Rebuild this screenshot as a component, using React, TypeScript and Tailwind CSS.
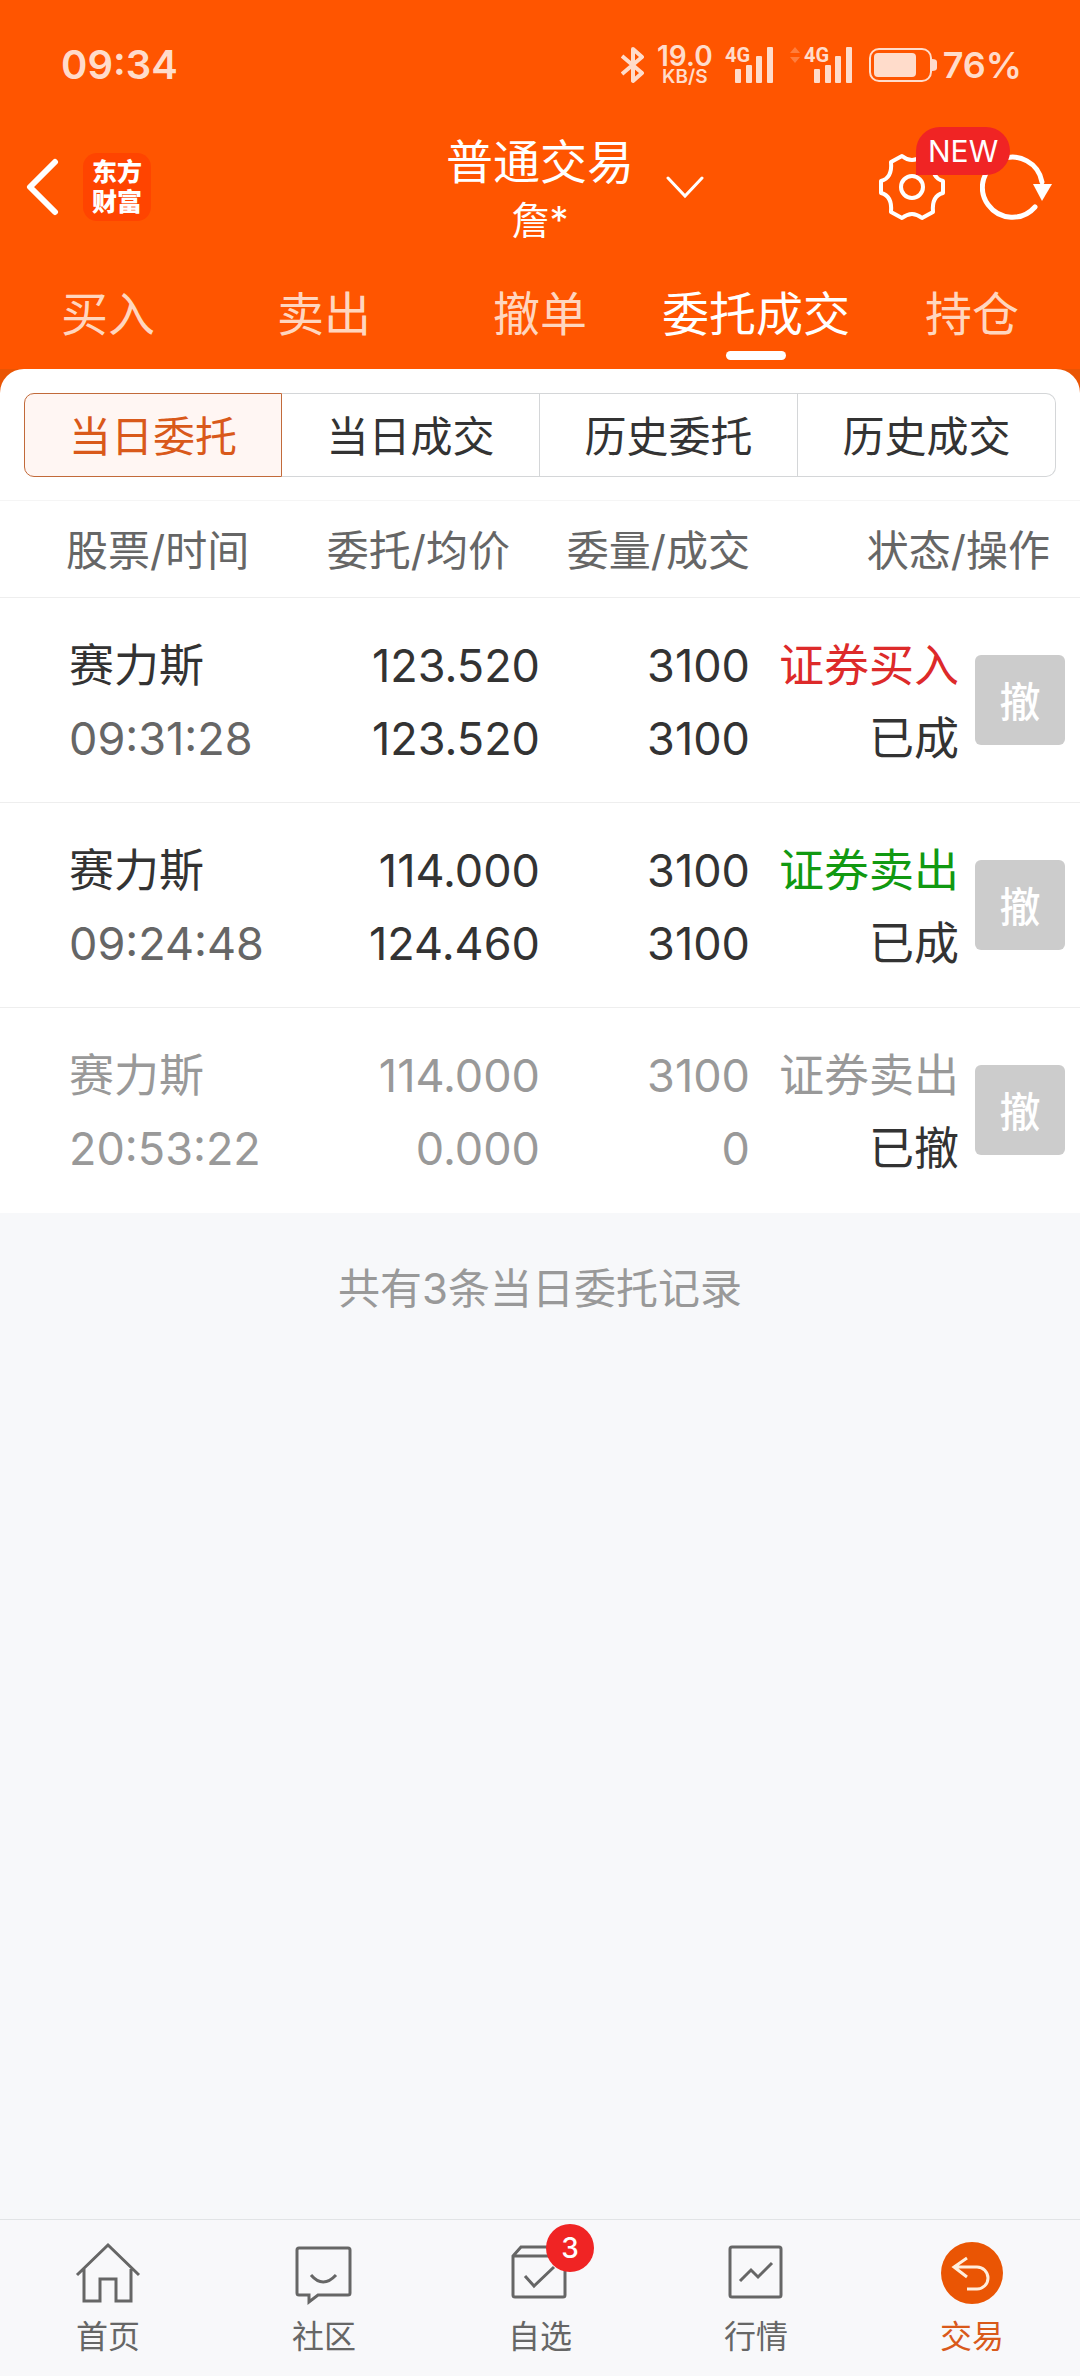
import React from 'react';

interface Order {
  name: string;
  time: string;
  price: string;
  avgPrice: string;
  volume: string;
  filled: string;
  side: string;
  sideColor: string;
  status: string;
  cancelled?: boolean;
}

const orders: Order[] = [
  { name: '赛力斯', time: '09:31:28', price: '123.520', avgPrice: '123.520', volume: '3100', filled: '3100', side: '证券买入', sideColor: 'text-[#dd2a2a]', status: '已成' },
  { name: '赛力斯', time: '09:24:48', price: '114.000', avgPrice: '124.460', volume: '3100', filled: '3100', side: '证券卖出', sideColor: 'text-[#119911]', status: '已成' },
  { name: '赛力斯', time: '20:53:22', price: '114.000', avgPrice: '0.000', volume: '3100', filled: '0', side: '证券卖出', sideColor: 'text-[#999999]', status: '已撤', cancelled: true },
];

const tabs = ['买入', '卖出', '撤单', '委托成交', '持仓'];
const segments = ['当日委托', '当日成交', '历史委托', '历史成交'];

const Signal: React.FC = () => (
  <svg className="h-[38px] w-[49px] overflow-visible" viewBox="0 0 49 38" fill="currentColor">
    <text x="0" y="16" fontSize="20" fontWeight="700" fontFamily="Roboto, sans-serif">4G</text>
    <rect x="10" y="23" width="6" height="14" rx="1" />
    <rect x="21" y="19" width="6" height="18" rx="1" />
    <rect x="31" y="10" width="6" height="27" rx="1" />
    <rect x="42" y="1" width="6" height="36" rx="1" />
  </svg>
);

const StatusBar: React.FC = () => (
  <div className="flex h-[130px] items-center justify-between pl-[61px] pr-[58px] font-semibold text-[#ffdccb]">
    <span className="text-[40px]">09:34</span>
    <div className="flex items-center">
      <svg className="h-[38px] w-6" viewBox="0 0 24 38" fill="none" stroke="currentColor" strokeWidth="4" strokeLinejoin="round">
        <path d="M1 10L21 27L12 35V3L21 11L1 28" />
      </svg>
      <div className="ml-3 flex flex-col items-center">
        <span className="text-[28px] leading-[24px]">19.0</span>
        <span className="text-[19px] leading-[18px]">KB/S</span>
      </div>
      <div className="ml-3">
        <Signal />
      </div>
      <svg className="ml-4 mb-5 h-4 w-[10px] opacity-30" viewBox="0 0 10 16" fill="currentColor">
        <path d="M5 0L10 6H0ZM5 16L0 10H10Z" />
      </svg>
      <div className="ml-1">
        <Signal />
      </div>
      <svg className="ml-4 h-9 w-[68px]" viewBox="0 0 68 36" fill="none">
        <rect x="1" y="2" width="61" height="32" rx="9" stroke="currentColor" strokeWidth="2" />
        <rect x="5" y="6" width="42" height="24" rx="4" fill="currentColor" />
        <path d="M63 12q5 0 5 3v6q0 3-5 3Z" fill="currentColor" />
      </svg>
      <span className="ml-[6px] text-[36px]">76%</span>
    </div>
  </div>
);

const Header: React.FC = () => (
  <header className="bg-[#ff5500] text-white">
    <StatusBar />
    <div className="grid h-[118px] grid-cols-[1fr_auto_1fr] items-center">
      <div className="flex items-center gap-6 pb-1 pl-[26px]">
        <button aria-label="返回">
          <svg className="h-[58px] w-[33px]" viewBox="0 0 33 58" fill="none" stroke="currentColor" strokeWidth="6" strokeLinecap="round" strokeLinejoin="round">
            <path d="M29 4L4 29L29 54" />
          </svg>
        </button>
        <div className="flex size-[68px] flex-col items-center justify-center rounded-[14px] bg-[#ff4400] text-[25px] font-black leading-[30px]">
          <span>东方</span>
          <span>财富</span>
        </div>
      </div>
      <div className="pt-[2px] text-center">
        <h1 className="text-[47px] leading-[60px]">普通交易</h1>
        <p className="text-[38px] leading-[56px]">詹*</p>
      </div>
      <div className="flex items-center justify-between pb-1 pl-8 pr-[26px]">
        <button aria-label="切换账户">
          <svg className="h-6 w-[38px]" viewBox="0 0 38 24" fill="none" stroke="currentColor" strokeWidth="3" strokeLinecap="round">
            <path d="M2 3L19 21L36 3" />
          </svg>
        </button>
        <div className="flex items-center gap-[34px]">
          <button aria-label="设置" className="relative">
            <svg className="size-[68px]" viewBox="-34 -34 68 68" fill="none" stroke="currentColor" strokeWidth="4" strokeLinejoin="round">
              <path d="M-10-31Q0-23 10-31L21-25C20-14 23-8 31-6V6C23 8 20 14 21 25L10 31Q0 23-10 31L-21 25C-20 14-23 8-31 6V-6C-23-8-20-14-21-25Z" />
              <circle r="11" />
            </svg>
            <span className="absolute -top-[26px] left-[38px] h-12 rounded-[24px] rounded-bl-none bg-[#f02424] px-3 text-[30px] leading-[48px]">NEW</span>
          </button>
          <button aria-label="刷新">
            <svg className="size-[74px]" viewBox="-33 -37 74 74" fill="none" stroke="currentColor" strokeWidth="5" strokeLinecap="round">
              <path d="M22 20A30 30 0 1 1 29-5" />
              <path d="M20-3H39L29 14Z" fill="currentColor" stroke="none" />
            </svg>
          </button>
        </div>
      </div>
    </div>
    <nav className="grid h-[121px] grid-cols-5 text-[47px] leading-[60px]">
      {tabs.map((tab) => {
        const active = tab === '委托成交';
        return (
          <button key={tab} className={`flex flex-col items-center pt-9 ${active ? 'text-white' : 'text-[#ffd6bf]'}`}>
            {tab}
            {active && <span className="mt-[7px] h-[9px] w-[60px] rounded-full bg-white" />}
          </button>
        );
      })}
    </nav>
  </header>
);

const OrderRow: React.FC<{ order: Order }> = ({ order }) => (
  <tr className={`h-[205px] border-b border-[#eeeeee] last:border-b-0 ${order.cancelled ? 'text-[#999999]' : 'text-[#333333]'}`}>
    <td className="pl-[69px] pt-1">
      <div>{order.name}</div>
      <div className={order.cancelled ? '' : 'text-[#666666]'}>{order.time}</div>
    </td>
    <td className="pt-1 text-right">
      <div>{order.price}</div>
      <div>{order.avgPrice}</div>
    </td>
    <td className="pt-1 text-right">
      <div>{order.volume}</div>
      <div>{order.filled}</div>
    </td>
    <td className="pr-[15px]">
      <div className="flex items-center justify-end gap-4">
        <div className="pt-1 text-right">
          <div className={order.sideColor}>{order.side}</div>
          <div className="text-[#333333]">{order.status}</div>
        </div>
        <button className="size-[90px] rounded-md bg-[#cccccc] pt-1 text-[41px] font-medium leading-none text-white">撤</button>
      </div>
    </td>
  </tr>
);

const navItems = [
  {
    label: '首页',
    icon: <path d="M2 34L33 4L64 34M9 28V60H25V38H41V60H56V28" />,
  },
  {
    label: '社区',
    icon: (
      <>
        <path d="M8 7H57Q59 7 59 9V52Q59 54 57 54H27L18 61V54H8Q6 54 6 52V9Q6 7 8 7Z" />
        <path d="M20 34Q32 48 45 34" />
      </>
    ),
  },
  {
    label: '自选',
    badge: '3',
    icon: <path d="M6 15H58M6 15L14 6H50L58 15V54Q58 56 56 56H8Q6 56 6 54ZM18 35L27 45L47 26" />,
  },
  {
    label: '行情',
    icon: <path d="M9 6H56Q58 6 58 8V54Q58 56 56 56H9Q7 56 7 54V8Q7 6 9 6ZM17 40L28 29L35 36L49 22" />,
  },
  {
    label: '交易',
    active: true,
    icon: (
      <>
        <circle cx="33" cy="32" r="31" fill="#ea5504" stroke="none" />
        <path d="M28 17L15 26L28 36M15 26H38A11 11 0 0 1 38 48H28" stroke="#ffeedd" />
      </>
    ),
  },
];

const BottomNav: React.FC = () => (
  <nav className="mt-auto grid grid-cols-5 border-t border-[#e2e4e6] bg-[#f8f8fa] pb-[18px] pt-[21px]">
    {navItems.map((item) => (
      <a key={item.label} href="#" className={`flex flex-col items-center gap-[9px] ${item.active ? 'text-[#d9591a]' : 'text-[#666666]'}`}>
        <span className="relative">
          <svg className="size-[66px]" viewBox="0 0 66 66" fill="none" stroke="currentColor" strokeWidth="3">
            {item.icon}
          </svg>
          {item.badge && (
            <span className="absolute -top-[17px] left-[39px] size-12 rounded-full bg-[#f02424] text-center text-[28px] font-medium leading-[48px] text-white">
              {item.badge}
            </span>
          )}
        </span>
        <span className="text-[32px] leading-[42px]">{item.label}</span>
      </a>
    ))}
  </nav>
);

const App: React.FC = () => (
  <div className="flex min-h-screen flex-col bg-[#f7f8fa] font-['Inter','Noto_Sans_CJK_SC',sans-serif]">
    <Header />
    <main>
      <div className="bg-[#ea5504]">
        <div className="rounded-t-[24px] bg-white px-6 pb-[23px] pt-6">
          <div className="grid grid-cols-4 text-[42px] leading-[60px]">
            {segments.map((segment, i) => (
              <button
                key={segment}
                className={`h-[84px] border pt-1 first:rounded-l-[10px] last:rounded-r-[10px] ${
                  i === 0 ? 'border-[#c26a3a] bg-[#fff6f3] text-[#d9591a]' : 'border-l-0 border-[#d4d6d8] text-[#333333]'
                }`}
              >
                {segment}
              </button>
            ))}
          </div>
        </div>
      </div>
      <table className="w-full table-fixed border-t border-[#f5f5f5] bg-white">
        <thead>
          <tr className="h-[97px] border-b border-[#eeeeee] text-[42px] leading-[60px] text-[#666666]">
            <th className="w-1/4 pl-[66px] pt-1 text-left font-normal">股票/时间</th>
            <th className="w-1/4 pr-[30px] pt-1 text-right font-normal">委托/均价</th>
            <th className="w-[210px] pt-1 text-right font-normal">委量/成交</th>
            <th className="pr-[30px] pt-1 text-right font-normal">状态/操作</th>
          </tr>
        </thead>
        <tbody className="text-[45px] leading-[73px]">
          {orders.map((order) => (
            <OrderRow key={order.time} order={order} />
          ))}
        </tbody>
      </table>
      <p className="pt-[46px] text-center text-[42px] leading-[60px] text-[#999999]">共有3条当日委托记录</p>
    </main>
    <BottomNav />
  </div>
);

export default App;
